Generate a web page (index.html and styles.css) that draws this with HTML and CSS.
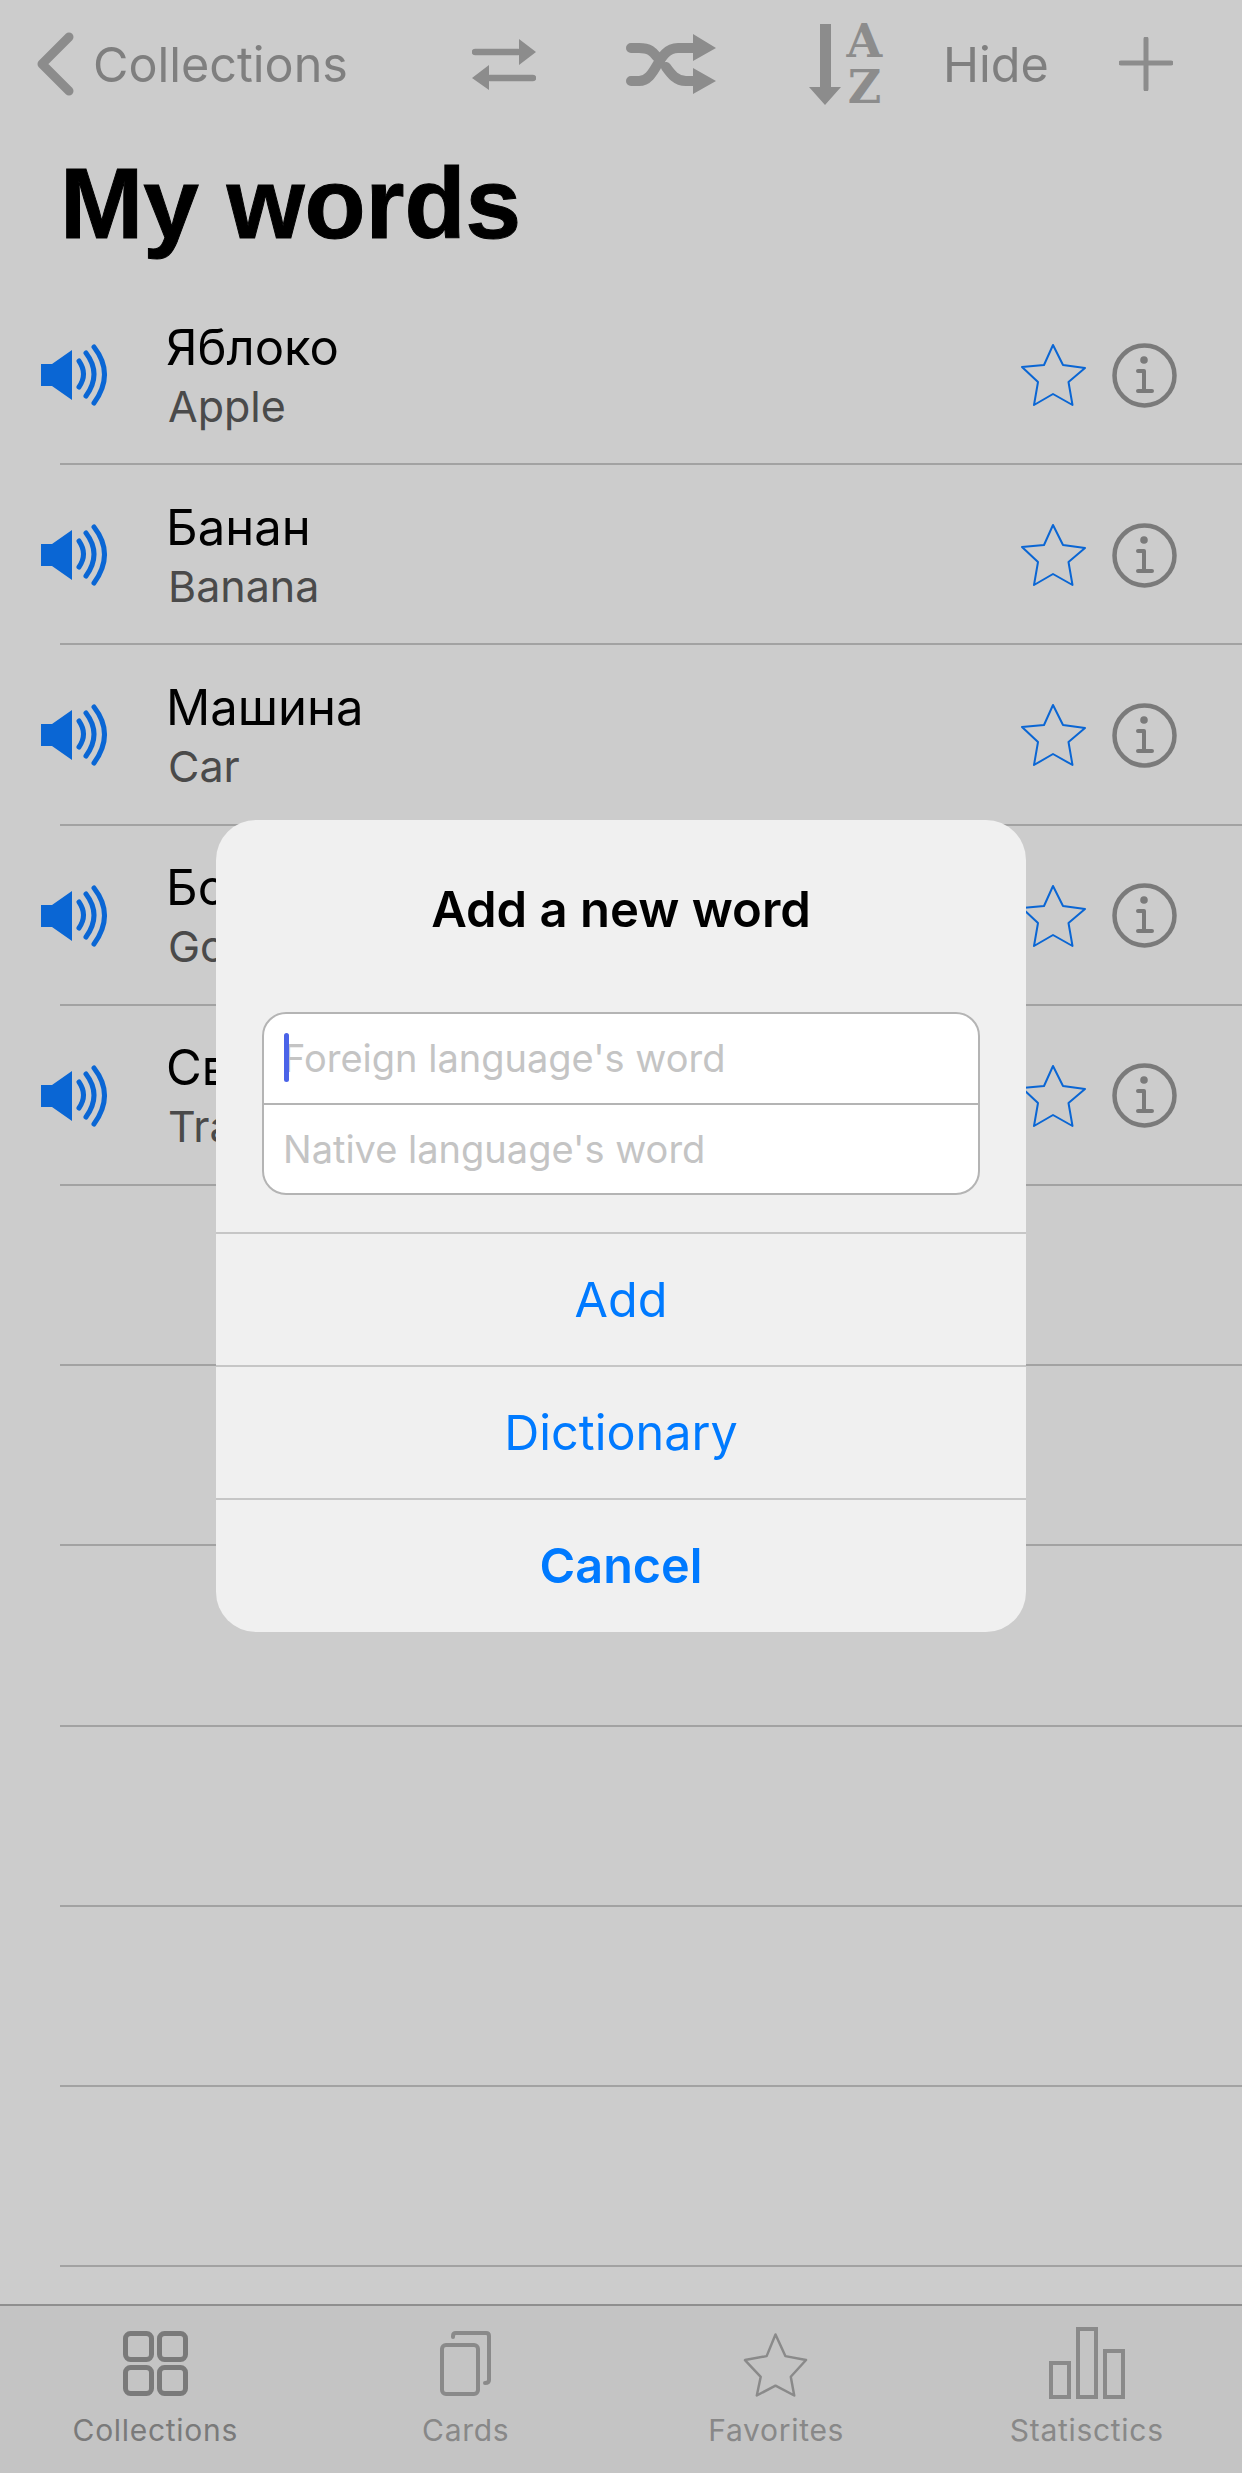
FILE: index.html
```html
<!DOCTYPE html>
<html lang="en">
<head>
    <meta charset="UTF-8">
    <meta name="viewport" content="width=device-width, initial-scale=1.0">
    <title>My words</title>
    <link rel="stylesheet" href="styles.css">
</head>
<body>
    <svg class="defs" width="0" height="0">
        <symbol id="speaker" viewBox="0 0 68 62">
            <path d="M0 20H11L31 6V56L11 42H0Z" fill="#0a66d4"/>
            <path d="M38 17Q47 30 38 43M45 9Q61 30 45 52M53 3Q74 30 53 59" fill="none" stroke="#0a66d4" stroke-width="5" stroke-linecap="round"/>
        </symbol>
        <symbol id="star" viewBox="-2 -2 67 64">
            <path d="M31 0L41 20L63 23L46.5 37L50.5 60L31 49L12 60L16 37L0 22L22 20Z" fill="none" stroke-linejoin="round" stroke-width="2"/>
        </symbol>
        <symbol id="info" viewBox="0 0 65 65">
            <circle cx="32.5" cy="32.5" r="30" fill="none" stroke="#7a7a7a" stroke-width="4.5"/>
            <circle cx="32" cy="17" r="3.8" fill="#7a7a7a"/>
            <path d="M26 28H32V48M26 48H40" fill="none" stroke="#7a7a7a" stroke-width="4" stroke-linecap="round" stroke-linejoin="round"/>
        </symbol>
    </svg>

    <div id="app">
        <div class="nav">
            <svg class="back" width="40" height="66" viewBox="0 0 40 66"><path d="M33 6L6 33L33 60" fill="none" stroke="#8c8c8c" stroke-width="9" stroke-linecap="round" stroke-linejoin="round"/></svg>
            <span class="nav-text nav-back">Collections</span>
            <svg class="swap" width="64" height="51" viewBox="0 0 64 51">
                <path d="M3 13H46M61 39H18" stroke="#8c8c8c" stroke-width="6.5" stroke-linecap="round"/>
                <path d="M47 0L64 13L47 26ZM17 26L0 39L17 51Z" fill="#8c8c8c"/>
            </svg>
            <svg class="shuffle" width="90" height="60" viewBox="0 0 90 60">
                <path d="M5 14H13C24 14 27 18 31 23M5 47H13C31 47 31 14 52 14H70M40 33C45 40 50 47 60 47H70" fill="none" stroke="#8c8c8c" stroke-width="10" stroke-linecap="round"/>
                <path d="M67 0L90 14L67 27ZM67 34L90 47L67 60Z" fill="#8c8c8c"/>
            </svg>
            <div class="sort">
                <svg width="32" height="81" viewBox="0 0 32 81"><path d="M11 0H22V63H32L16 81L0 63H11Z" fill="#8c8c8c"/></svg>
                <div class="sort-letters"><span>A</span><span>Z</span></div>
            </div>
            <span class="nav-text nav-hide">Hide</span>
            <svg class="plus" width="54" height="54" viewBox="0 0 54 54"><path d="M27 2V52M2 26H52" stroke="#8c8c8c" stroke-width="5" stroke-linecap="round"/></svg>
        </div>

        <h1 class="title">My words</h1>

        <div id="list">
            <div class="row">
                <svg class="speaker"><use href="#speaker"/></svg>
                <div class="words"><div class="foreign">Яблоко</div><div class="native">Apple</div></div>
                <svg class="star"><use href="#star"/></svg>
                <svg class="info"><use href="#info"/></svg>
            </div>
            <div class="row">
                <svg class="speaker"><use href="#speaker"/></svg>
                <div class="words"><div class="foreign">Банан</div><div class="native">Banana</div></div>
                <svg class="star"><use href="#star"/></svg>
                <svg class="info"><use href="#info"/></svg>
            </div>
            <div class="row">
                <svg class="speaker"><use href="#speaker"/></svg>
                <div class="words"><div class="foreign">Машина</div><div class="native">Car</div></div>
                <svg class="star"><use href="#star"/></svg>
                <svg class="info"><use href="#info"/></svg>
            </div>
            <div class="row">
                <svg class="speaker"><use href="#speaker"/></svg>
                <div class="words"><div class="foreign">Бог</div><div class="native">God</div></div>
                <svg class="star"><use href="#star"/></svg>
                <svg class="info"><use href="#info"/></svg>
            </div>
            <div class="row">
                <svg class="speaker"><use href="#speaker"/></svg>
                <div class="words"><div class="foreign">Свет</div><div class="native">Train</div></div>
                <svg class="star"><use href="#star"/></svg>
                <svg class="info"><use href="#info"/></svg>
            </div>
            <div class="row"></div>
            <div class="row"></div>
            <div class="row"></div>
            <div class="row"></div>
            <div class="row"></div>
            <div class="row"></div>
        </div>

        <div class="tabbar">
            <div class="tab tab-active">
                <svg class="tab-icon" width="66" height="66" viewBox="0 0 66 66" fill="none" stroke="#7a7a7a" stroke-width="5">
                    <rect x="3.5" y="3.5" width="26" height="26" rx="5"/>
                    <rect x="37.5" y="3.5" width="26" height="26" rx="5"/>
                    <rect x="3.5" y="37.5" width="26" height="26" rx="5"/>
                    <rect x="37.5" y="37.5" width="26" height="26" rx="5"/>
                </svg>
                <span>Collections</span>
            </div>
            <div class="tab">
                <svg class="tab-icon" width="66" height="66" viewBox="0 0 66 66" fill="none" stroke="#8a8a8a" stroke-width="4" stroke-linecap="round">
                    <rect x="9" y="15" width="36" height="49" rx="4"/>
                    <path d="M20 7V6Q20 3 23 3H53Q56 3 56 6V50Q56 53 52 53"/>
                </svg>
                <span>Cards</span>
            </div>
            <div class="tab">
                <svg class="tab-icon" width="66" height="66" viewBox="-2 -4 67 66" fill="none" stroke="#8a8a8a" stroke-width="2.5" stroke-linejoin="round">
                    <path d="M31 0L41 22L62 26L46.5 43L50 62L31 52L12 62L16 43L0 26L22 22Z"/>
                </svg>
                <span>Favorites</span>
            </div>
            <div class="tab">
                <svg class="tab-icon" width="76" height="72" viewBox="0 0 76 72" fill="none" stroke="#8a8a8a" stroke-width="4">
                    <rect x="2" y="36" width="18" height="34"/>
                    <rect x="29" y="2" width="18" height="68"/>
                    <rect x="56" y="24" width="18" height="46"/>
                </svg>
                <span>Statisctics</span>
            </div>
        </div>

        <div class="dialog">
            <div class="dialog-title">Add a new word</div>
            <div class="fields">
                <div class="field"><i class="caret"></i>Foreign language's word</div>
                <div class="field">Native language's word</div>
            </div>
            <div class="action">Add</div>
            <div class="action">Dictionary</div>
            <div class="action cancel">Cancel</div>
        </div>
    </div>
</body>
</html>
```
FILE: styles.css
```css
*{
    box-sizing: border-box;
}

body{
    margin: 0;
    font-family: Inter, "Noto Sans", sans-serif;
    background-color: #cccccc;
}

.defs{
    position: absolute;
}

#app{
    position: relative;
    width: 1242px;
    height: 2473px;
    overflow: hidden;
    display: flex;
    flex-direction: column;
}

.nav{
    height: 128px;
    display: flex;
    align-items: center;
    padding-left: 36px;
    flex-shrink: 0;
}

.nav svg{
    flex-shrink: 0;
}

.nav-text{
    font-size: 48.5px;
    color: #7f7f7f;
}

.nav-back{
    margin-left: 17px;
}

.swap{
    margin-left: 124px;
}

.shuffle{
    margin-left: 90px;
}

.sort{
    margin-left: 93px;
    width: 74px;
    display: flex;
    align-items: center;
    gap: 5px;
}

.sort-letters{
    width: 37px;
    display: flex;
    flex-direction: column;
    align-items: center;
    font-family: "DejaVu Serif", serif;
    font-weight: bold;
    font-size: 46px;
    line-height: 46px;
    color: #8c8c8c;
}

.nav-hide{
    margin-left: 60px;
}

.plus{
    margin-left: 70px;
}

.title{
    margin: 0;
    height: 157px;
    padding-left: 60px;
    font-family: "Liberation Sans", Arial, sans-serif;
    font-size: 100px;
    line-height: 150px;
    font-weight: 700;
    -webkit-text-stroke: 1px #000;
    color: #000;
    flex-shrink: 0;
}

#list{
    flex: 1;
}

.row{
    height: 180.2px;
    margin-left: 60px;
    border-bottom: 2px solid #a2a2a2;
    display: flex;
    align-items: center;
    position: relative;
}

.speaker{
    width: 68px;
    height: 62px;
    margin-left: -19px;
    margin-top: 2px;
    flex-shrink: 0;
}

.words{
    margin-left: 57px;
    padding-top: 5px;
    flex: 1;
}

.foreign{
    font-size: 49px;
    line-height: 58px;
    color: #000;
}

.native{
    font-size: 43px;
    line-height: 58px;
    color: #4a4a4a;
    margin-left: 2px;
}

.star{
    width: 67px;
    height: 64px;
    margin-top: 2px;
    stroke: #0a66d4;
    flex-shrink: 0;
}

.info{
    width: 65px;
    height: 65px;
    margin-left: 25px;
    margin-right: 65px;
    margin-top: 2px;
    flex-shrink: 0;
}

.tabbar{
    height: 169px;
    flex-shrink: 0;
    background-color: #c4c4c4;
    border-top: 2px solid #8f8f8f;
    display: grid;
    grid-template-columns: repeat(4, 1fr);
}

.tab{
    display: flex;
    flex-direction: column;
    align-items: center;
    font-size: 30px;
    letter-spacing: 0.7px;
    color: #888888;
}

.tab-active{
    color: #7a7a7a;
}

.tab-icon{
    height: 72px;
    margin-top: 21px;
    margin-bottom: 13px;
}

.dialog{
    position: absolute;
    left: 216px;
    top: 820px;
    width: 810px;
    height: 812px;
    background-color: #f0f0f0;
    border-radius: 40px;
    overflow: hidden;
}

.dialog-title{
    height: 192px;
    padding-top: 60px;
    text-align: center;
    font-size: 49px;
    line-height: 60px;
    font-weight: 600;
    color: #000;
}

.fields{
    margin: 0 46px 37px;
    height: 183px;
    background-color: #fff;
    border: 2px solid #b4b4b4;
    border-radius: 24px;
}

.field{
    height: 89px;
    padding-left: 19px;
    font-size: 38px;
    line-height: 89px;
    color: #c4c4c4;
    position: relative;
}

.field + .field{
    height: 90px;
    border-top: 2px solid #b4b4b4;
}

.caret{
    position: absolute;
    left: 20px;
    top: 19px;
    width: 5px;
    height: 49px;
    border-radius: 3px;
    background-color: #4a63e8;
}

.action{
    height: 133px;
    border-top: 2px solid #c6c6c6;
    text-align: center;
    font-size: 48.5px;
    line-height: 131px;
    color: #007aff;
}

.cancel{
    font-weight: 600;
}
```
